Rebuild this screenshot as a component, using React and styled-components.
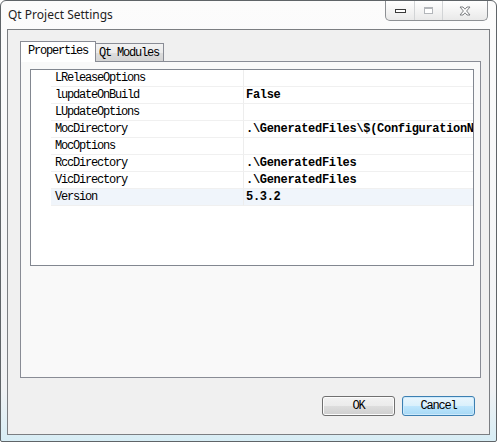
import React from 'react';
import styled, { createGlobalStyle } from 'styled-components';

const GlobalStyle = createGlobalStyle`
  html, body {
    margin: 0;
    padding: 0;
    background: #fff;
  }
  body {
    font-family: "Noto Sans", sans-serif;
  }
`;

const Window = styled.div`
  box-sizing: border-box;
  width: 497px;
  height: 442px;
  border: 1px solid #5f6468;
  border-radius: 6px 6px 2px 2px;
  background: linear-gradient(#fcfcfc, #f1f2f4 88%, #d7edf5);
  display: flex;
  flex-direction: column;
  padding: 0 6px 6px 6px;
  overflow: hidden;
`;

const TitleBar = styled.div`
  height: 28px;
  display: flex;
  justify-content: space-between;
  align-items: flex-start;
  padding-left: 1px;
`;

const Title = styled.span`
  font-family: "Noto Sans", "Open Sans", sans-serif;
  font-size: 12px;
  line-height: 28px;
  color: #1e1e1e;
`;

const CaptionGroup = styled.div`
  display: flex;
  height: 19px;
  margin-right: 2px;
  border: 1px solid #8d9094;
  border-top: none;
  border-radius: 0 0 5px 5px;
  background: linear-gradient(#ffffff, #f4f4f4 50%, #e9e9e9);
  overflow: hidden;
`;

const CaptionButton = styled.div`
  width: ${p => p.w}px;
  display: flex;
  align-items: center;
  justify-content: center;
  border-left: ${p => (p.first ? 'none' : '1px solid #d2d4d6')};
`;

const Client = styled.div`
  flex: 1;
  display: flex;
  flex-direction: column;
  border: 1px solid #7b7e82;
  background: #f0f0f0;
  padding: 11px 8px 0 12px;
`;

const TabBar = styled.div`
  display: flex;
  align-items: flex-end;
  height: 20px;
`;

const Tab = styled.div`
  box-sizing: border-box;
  width: ${p => p.w}px;
  height: ${p => (p.active ? 21 : 18)}px;
  margin-bottom: ${p => (p.active ? -1 : 0)}px;
  position: relative;
  z-index: ${p => (p.active ? 1 : 0)};
  border: 1px solid #898c95;
  border-bottom: none;
  border-left: ${p => (p.active ? '1px solid #898c95' : 'none')};
  background: ${p =>
    p.active ? '#ffffff' : 'linear-gradient(#f2f2f2, #ebebeb 50%, #dddddd 51%, #d4d4d4)'};
  font-family: "Liberation Mono", monospace;
  font-size: 12px;
  letter-spacing: -1.2px;
  color: #000;
  padding-left: ${p => (p.active ? 7 : 3)}px;
  line-height: ${p => (p.active ? 19 : 18)}px;
  white-space: nowrap;
`;

const Pane = styled.div`
  flex: 1;
  display: flex;
  flex-direction: column;
  border: 1px solid #898c95;
  background: #f9f9f9;
  padding: 7px 6px 0 9px;
`;

const Table = styled.div`
  box-sizing: border-box;
  height: 197px;
  border: 1px solid #828790;
  background: #fff;
  overflow: hidden;
`;

const Row = styled.div`
  display: grid;
  grid-template-columns: 20px 192px 1fr;
  height: 17px;
  background: ${p => (p.hover ? '#f0f5fb' : 'transparent')};
`;

const Indent = styled.div`
  background: #fff;
`;

const Cell = styled.div`
  box-sizing: border-box;
  height: 17px;
  border-bottom: 1px solid #f0f0f0;
  border-left: ${p => (p.value ? '1px solid #ededed' : 'none')};
  padding-left: ${p => (p.value ? 2 : 4)}px;
  font-family: "Liberation Mono", monospace;
  font-size: 12px;
  line-height: 16px;
  font-weight: ${p => (p.value ? 700 : 400)};
  letter-spacing: ${p => (p.value ? -0.3 : -1.2)}px;
  color: #000;
  white-space: nowrap;
  overflow: hidden;
`;

const Footer = styled.div`
  height: 56px;
  box-sizing: border-box;
  display: flex;
  justify-content: flex-end;
  align-items: flex-start;
  gap: 7px;
  padding: 18px 6px 0 0;
`;

const Button = styled.button`
  box-sizing: border-box;
  width: 73px;
  height: 20px;
  padding: 0;
  border: 1px solid ${p => (p.focused ? '#3c7fb1' : '#707070')};
  border-radius: 3px;
  background: ${p =>
    p.focused
      ? 'linear-gradient(#eaf6fd, #d9f0fc 50%, #bee6fd 51%, #a7d9f5)'
      : 'linear-gradient(#f2f2f2, #ebebeb 50%, #dddddd 51%, #cfcfcf)'};
  box-shadow: inset 0 0 0 1px ${p => (p.focused ? '#cdeafc' : '#fcfcfc')};
  font-family: "Liberation Mono", monospace;
  font-size: 12px;
  letter-spacing: -1.2px;
  color: #000;
`;

const rows = [
  ['LReleaseOptions', ''],
  ['lupdateOnBuild', 'False'],
  ['LUpdateOptions', ''],
  ['MocDirectory', '.\\GeneratedFiles\\$(ConfigurationName)'],
  ['MocOptions', ''],
  ['RccDirectory', '.\\GeneratedFiles'],
  ['VicDirectory', '.\\GeneratedFiles'],
  ['Version', '5.3.2'],
];

const MinimizeIcon = () => (
  <svg width="13" height="6" viewBox="0 0 13 6">
    <rect x="1.5" y="1.5" width="10" height="3" fill="#fff" stroke="#3a3a3a" />
  </svg>
);

const MaximizeIcon = () => (
  <svg width="11" height="9" viewBox="0 0 11 9">
    <rect x="1.5" y="1.5" width="8" height="6" fill="#fff" stroke="#b3b6ba" />
    <line x1="2" y1="2.5" x2="9" y2="2.5" stroke="#b3b6ba" />
  </svg>
);

const CloseIcon = () => (
  <svg width="12" height="10" viewBox="0 0 12 10">
    <path
      d="M1 1 L4 1 L6 3.2 L8 1 L11 1 L7.6 5 L11 9 L8 9 L6 6.8 L4 9 L1 9 L4.4 5 Z"
      fill="#fff"
      stroke="#7d7f82"
      strokeWidth="1"
      strokeLinejoin="round"
    />
  </svg>
);

export default function App() {
  return (
    <>
      <GlobalStyle />
      <Window>
        <TitleBar>
          <Title>Qt Project Settings</Title>
          <CaptionGroup>
            <CaptionButton w={28} first>
              <MinimizeIcon />
            </CaptionButton>
            <CaptionButton w={27}>
              <MaximizeIcon />
            </CaptionButton>
            <CaptionButton w={44}>
              <CloseIcon />
            </CaptionButton>
          </CaptionGroup>
        </TitleBar>
        <Client>
          <TabBar>
            <Tab w={76} active>Properties</Tab>
            <Tab w={68}>Qt Modules</Tab>
          </TabBar>
          <Pane>
            <Table>
              {rows.map(([name, value], i) => (
                <Row key={name} hover={i === rows.length - 1}>
                  <Indent />
                  <Cell>{name}</Cell>
                  <Cell value>{value}</Cell>
                </Row>
              ))}
            </Table>
          </Pane>
          <Footer>
            <Button>OK</Button>
            <Button focused>Cancel</Button>
          </Footer>
        </Client>
      </Window>
    </>
  );
}
